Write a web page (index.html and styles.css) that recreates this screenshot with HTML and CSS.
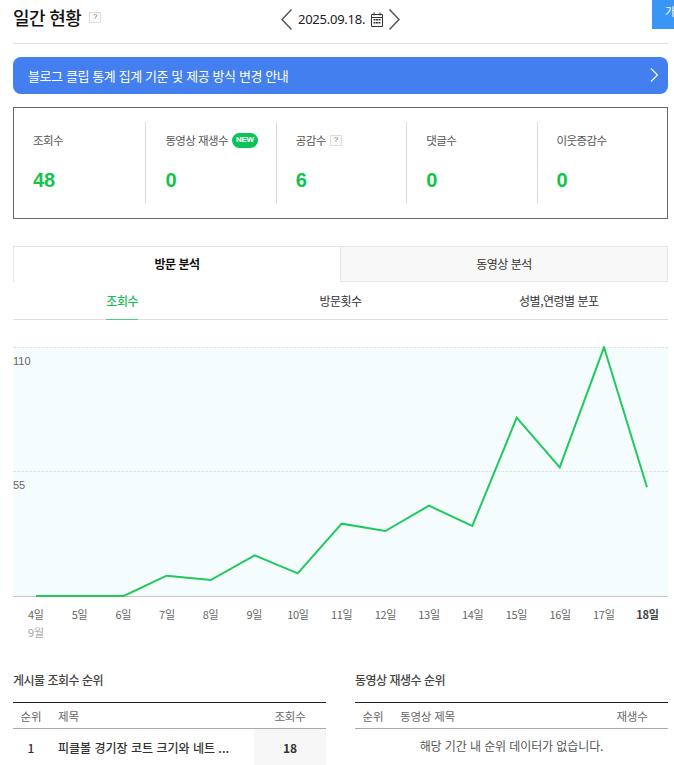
FILE: index.html
```html
<!DOCTYPE html>
<html lang="ko">
<head>
<meta charset="utf-8">
<title>일간 현황</title>
<link rel="stylesheet" href="styles.css">
</head>
<body>
<div class="corner">가</div>
<div class="page">
  <header class="top">
    <div class="title-wrap"><h1 class="title">일간 현황</h1><span class="help">?</span></div>
    <div class="date-nav">
      <svg width="11" height="21" viewBox="0 0 11 21"><path d="M10.500 .5 1 10.500l9.500 10" fill="none" stroke="#555" stroke-width="1.500"/></svg>
      <span class="date">2025.09.18.</span>
      <svg class="cal" width="12" height="15" viewBox="0 0 12 15"><path d="M.5 2.500h11v12H.5zM.5 5.500h11" fill="none" stroke="#333"/><path d="M3 .5v3M9 .5v3" stroke="#333"/><path d="M2.500 7h2v1.500h-2zM5 7h2v1.500H5zM7.500 7h2v1.500h-2zM2.500 10h2v1.500h-2zM5 10h2v1.500H5zM7.500 10h2v1.500h-2z" fill="#333"/></svg>
      <svg width="11" height="21" viewBox="0 0 11 21"><path d="M.5 .5 10 10.500l-9.500 10" fill="none" stroke="#555" stroke-width="1.500"/></svg>
    </div>
  </header>
  <a class="notice"><span>블로그 클립 통계 집계 기준 및 제공 방식 변경 안내</span>
    <svg width="9" height="14" viewBox="0 0 9 14"><path d="M1 .5 7.500 7 1 13.500" fill="none" stroke="#fff" stroke-width="1.100"/></svg>
  </a>
  <section class="stats">
    <div class="stat"><div class="label">조회수</div><div class="value">48</div></div>
    <div class="stat"><div class="label">동영상 재생수<span class="new">NEW</span></div><div class="value">0</div></div>
    <div class="stat"><div class="label">공감수<span class="help small">?</span></div><div class="value">6</div></div>
    <div class="stat"><div class="label">댓글수</div><div class="value">0</div></div>
    <div class="stat"><div class="label">이웃증감수</div><div class="value">0</div></div>
  </section>
  <nav class="tabs">
    <div class="tab active">방문 분석</div>
    <div class="tab">동영상 분석</div>
  </nav>
  <nav class="subtabs">
    <div class="subtab"><span class="on">조회수</span></div>
    <div class="subtab"><span>방문횟수</span></div>
    <div class="subtab"><span>성별,연령별 분포</span></div>
  </nav>
  <div class="chart">
    <svg class="plot" width="655" height="252" viewBox="0 0 655 252">
      <rect x="0" y="1" width="655" height="249" fill="#f5fcfe"/>
      <path d="M0 1.500H655M0 125.500H655" stroke="#e0e6e8" stroke-dasharray="3 1"/>
      <path d="M0 250.500H655" stroke="#c4c7c9"/>
      <path d="M23 250 110.700 250 153.700 229.700 197.700 234 241.700 209.300 284.700 227.300 328.700 177.700 372.300 185 416 159.700 459.300 180 503.700 71.700 546.700 121.300 591 1.300 634 141.300" fill="none" stroke="#1fc95b" stroke-width="2"/>
    </svg>
    <span class="ytick y110">110</span>
    <span class="ytick y55">55</span>
  </div>
  <div class="xaxis">
    <span>4일</span><span>5일</span><span>6일</span><span>7일</span><span>8일</span><span>9일</span><span>10일</span><span>11일</span><span>12일</span><span>13일</span><span>14일</span><span>15일</span><span>16일</span><span>17일</span><span class="today">18일</span>
  </div>
  <div class="month">9월</div>
  <section class="ranks">
    <div class="rank">
      <h2 class="rank-title">게시물 조회수 순위</h2>
      <div class="rank-head"><span class="c-no">순위</span><span class="c-title">제목</span><span class="c-num">조회수</span></div>
      <div class="rank-row"><span class="c-no">1</span><span class="c-title">피클볼 경기장 코트 크기와 네트 ...</span><span class="c-num hl">18</span></div>
    </div>
    <div class="rank">
      <h2 class="rank-title">동영상 재생수 순위</h2>
      <div class="rank-head"><span class="c-no">순위</span><span class="c-title">동영상 제목</span><span class="c-num">재생수</span></div>
      <div class="empty">해당 기간 내 순위 데이터가 없습니다.</div>
    </div>
  </section>
</div>
</body>
</html>
```
FILE: styles.css
```css
* { box-sizing: border-box; }
html, body { margin: 0; padding: 0; }
body { position: relative; background: #fff; color: #222; font-family: "Noto Sans CJK KR", "Noto Sans", sans-serif; height: 765px; overflow: hidden; }
.page { width: 655px; margin-left: 13px; height: 765px; overflow: hidden; }
.top { position: relative; display: flex; align-items: center; height: 44px; border-bottom: 1px solid #e2e2e2; }
.title-wrap { display: flex; align-items: center; gap: 8px; padding-bottom: 9px; }
.title { margin: 0; font-size: 18px; font-weight: 500; line-height: 26px; color: #111; letter-spacing: -0.6px; }
.help { display: inline-flex; align-items: center; justify-content: center; width: 12px; height: 11px; border: 1px solid #ddd; font: 8px/1 "Liberation Sans", sans-serif; color: #777; background: #fafafa; }
.help.small { margin-left: 4px; }
.date-nav { position: absolute; left: 268px; top: 9px; display: flex; align-items: center; height: 21px; }
.date { margin-left: 6px; font: 13px/21px "Noto Sans", sans-serif; color: #222; letter-spacing: -0.25px; }
.cal { margin: 0 6px; }
.corner { position: absolute; left: 652px; top: 0; width: 40px; height: 29px; padding: 3px 0 0 13px; background: #3a96f5; color: #fff; font-size: 11px; line-height: 16px; }
.notice { display: flex; align-items: center; justify-content: space-between; height: 37px; margin-top: 13px; padding: 0 9px 1px 15px; border-radius: 8px; background: #437fee; color: #fff; font-size: 13px; letter-spacing: -0.4px; }
.stats { display: flex; height: 112px; margin-top: 13px; padding: 14px 0 14px 1px; border: 1px solid #666; }
.stat { flex: 0 0 20%; padding: 9px 0 0 19px; border-left: 1px solid #ddd; height: 82px; }
.stat:first-child { border-left: 0; padding-left: 18px; }
.label { display: flex; align-items: center; height: 18px; font-size: 11.500px; color: #555; letter-spacing: -0.6px; }
.new { display: inline-flex; align-items: center; justify-content: center; width: 26px; height: 15px; margin-left: 4px; border-radius: 8px; background: #0cc35a; color: #fff; font: 700 8px/1 "Liberation Sans", sans-serif; letter-spacing: -0.3px; }
.value { margin-top: 19px; font: 700 20px/24px "Liberation Sans", sans-serif; color: #11c44c; }
.tabs { display: flex; height: 36px; margin-top: 27px; }
.tab { display: flex; align-items: center; justify-content: center; flex: 1 1 0; padding-bottom: 2px; font-size: 12px; color: #333; letter-spacing: -0.5px; border: 1px solid #e6e6e6; border-left: 0; background: #f8f8f8; }
.tab.active { font-weight: 700; color: #111; background: #fff; border-left: 1px solid #e6e6e6; border-bottom: 0; }
.subtabs { display: flex; height: 38px; border-bottom: 1px solid #ddd; }
.subtab { display: flex; justify-content: center; flex: 1 1 0; font-size: 12px; color: #333; letter-spacing: -0.5px; }
.subtab span { display: block; height: 38px; padding-top: 9px; line-height: 20px; }
.subtab .on { color: #18bd56; font-weight: 500; border-bottom: 1px solid #4fce80; }
.chart { position: relative; height: 286px; padding-top: 26px; }
.plot { display: block; }
.ytick { position: absolute; left: 0; font: 11px/14px "Liberation Sans", sans-serif; color: #666; }
.y110 { top: 34px; }
.y55 { top: 158px; }
.xaxis { display: grid; grid-template-columns: repeat(15, 43.700px); margin-left: 1px; font-size: 11px; line-height: 16px; color: #666; text-align: center; letter-spacing: -0.3px; }
.today { font-weight: 700; color: #444; }
.month { margin: 2px 0 0 15px; font-size: 11px; line-height: 16px; color: #aaa; }
.ranks { display: flex; gap: 29px; margin-top: 32px; }
.rank { flex: 1 1 0; }
.rank-title { margin: 0; font-size: 12px; line-height: 16px; font-weight: 500; color: #444; letter-spacing: -0.5px; }
.rank-head, .rank-row { display: flex; align-items: center; }
.rank-head { height: 27px; margin-top: 14px; border-top: 1px solid #222; border-bottom: 1px solid #aaa; font-size: 11.500px; color: #666; letter-spacing: -0.2px; }
.rank-row { height: 37px; font-size: 12px; font-weight: 500; color: #333; }
.c-no { width: 36px; text-align: center; }
.c-title { flex: 1 1 0; padding-left: 9px; white-space: nowrap; overflow: hidden; }
.c-num { width: 72px; text-align: center; }
.hl { display: flex; align-items: center; justify-content: center; align-self: stretch; background: #f7f7f7; font-weight: 700; }
.empty { padding-top: 8px; font-size: 12px; line-height: 18px; color: #555; text-align: center; letter-spacing: -0.1px; }
```
